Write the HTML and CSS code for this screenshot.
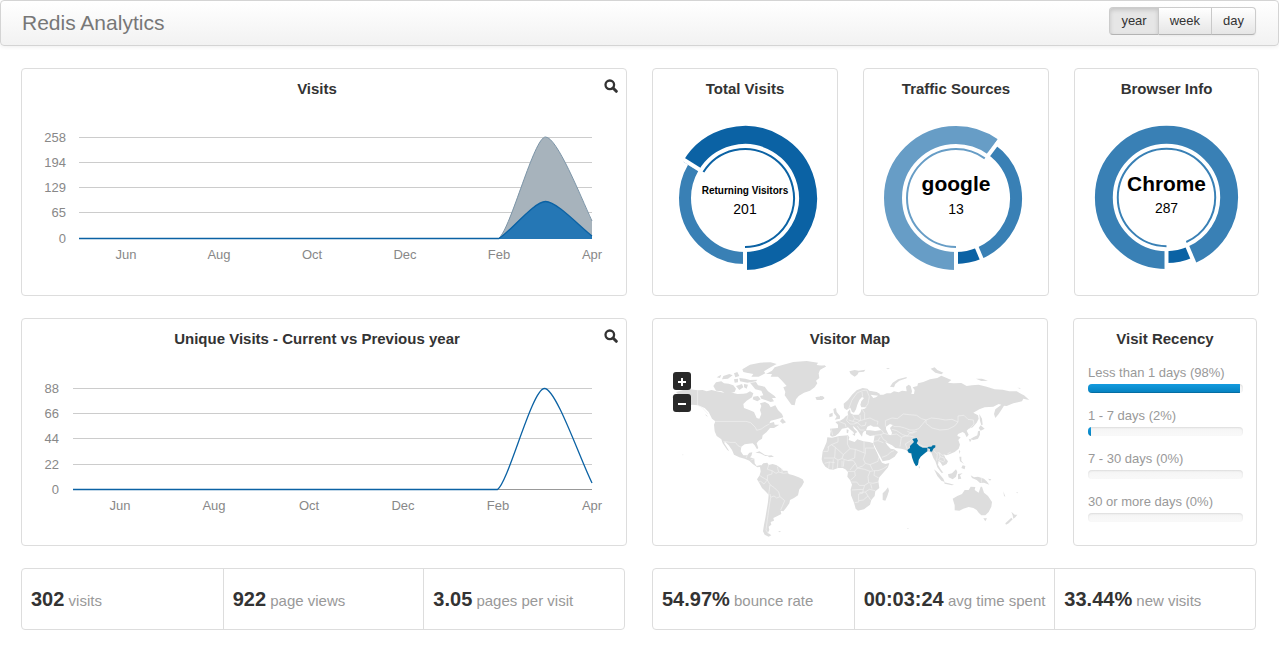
FILE: index.html
```html
<!DOCTYPE html>
<html lang="en">
<head>
<meta charset="utf-8">
<title>Redis Analytics</title>
<link rel="stylesheet" href="styles.css">
</head>
<body>
<header class="navbar">
  <h1 class="brand">Redis Analytics</h1>
  <div class="btn-group">
    <button type="button" class="btn active">year</button>
    <button type="button" class="btn">week</button>
    <button type="button" class="btn">day</button>
  </div>
</header>
<main class="dashboard">
  <div class="row row-top">
    <section class="panel">
      <div class="panel-head">
        <h2 class="title">Visits</h2>
        <button type="button" class="zoom" aria-label="Zoom visits"><svg class="zoom-icon" viewBox="0 0 14 14"><circle cx="5.8" cy="5.8" r="4.3"/><path d="M9 9L12.3 12.3"/></svg></button>
      </div>
      <svg class="chart" viewBox="22 99 604 196">
        <path class="grid" d="M79 137.5H592M79 162.5H592M79 187.5H592M79 212.5H592M79 238.5H592"/>
        <path class="area-total" d="M499 238C511 228 534 137 545.5 137C557 137 580 195 592 221V239H499Z"/>
        <path class="line-total" d="M499 238C511 228 534 137 545.5 137C557 137 580 195 592 221"/>
        <path class="area-unique" d="M499 238C511 231 534 201.500 545.5 201.5C557 201.5 580 227 592 236V239H499Z"/>
        <path class="line" d="M79 238.500H499C511 231 534 201.5 545.5 201.5C557 201.5 580 227 592 236"/>
        <g class="axis end">
          <text x="66" y="142">258</text><text x="66" y="167">194</text><text x="66" y="192">129</text><text x="66" y="217">65</text><text x="66" y="243">0</text>
        </g>
        <g class="axis mid">
          <text x="126" y="259">Jun</text><text x="219" y="259">Aug</text><text x="312" y="259">Oct</text><text x="405" y="259">Dec</text><text x="499" y="259">Feb</text><text x="592" y="259">Apr</text>
        </g>
      </svg>
    </section>
    <section class="panel">
      <h2 class="title">Total Visits</h2>
      <svg class="chart" viewBox="-92 -99 184 196">
        <circle class="seg-on dark" r="63" pathLength="360" stroke-dasharray="239.6 360" transform="rotate(-149.6)"/>
        <circle class="seg mid-blue" r="60" pathLength="360" stroke-dasharray="120.4 360" transform="rotate(90)"/>
        <circle class="ring dark" r="49" pathLength="360" stroke-dasharray="238 360" transform="rotate(-148)"/>
        <path class="gap" d="M52 0H75" transform="rotate(90)"/>
        <path class="gap" d="M52 0H75" transform="rotate(-148)"/>
        <text class="donut-small" y="-4">Returning Visitors</text>
        <text class="donut-value" y="16">201</text>
      </svg>
    </section>
    <section class="panel">
      <h2 class="title">Traffic Sources</h2>
      <svg class="chart" viewBox="-92 -99 184 196">
        <circle class="seg-on light" r="63" pathLength="360" stroke-dasharray="215.5 360" transform="rotate(90)"/>
        <circle class="seg mid-blue" r="60" pathLength="360" stroke-dasharray="121.7 360" transform="rotate(-54.5)"/>
        <circle class="seg dark" r="60" pathLength="360" stroke-dasharray="22.8 360" transform="rotate(67.2)"/>
        <circle class="ring light" r="49" pathLength="360" stroke-dasharray="216 360" transform="rotate(90)"/>
        <path class="gap" d="M52 0H75" transform="rotate(90)"/>
        <path class="gap" d="M52 0H75" transform="rotate(-53)"/>
        <path class="gap" d="M52 0H75" transform="rotate(67.2)"/>
        <text class="donut-big" y="-7">google</text>
        <text class="donut-value" y="16">13</text>
      </svg>
    </section>
    <section class="panel">
      <h2 class="title">Browser Info</h2>
      <svg class="chart" viewBox="-92 -99 184 196">
        <circle class="seg-on mid-blue" r="63" pathLength="360" stroke-dasharray="336.2 360" transform="rotate(90)"/>
        <circle class="seg dark" r="60" pathLength="360" stroke-dasharray="23.8 360" transform="rotate(66.2)"/>
        <circle class="ring mid-blue" r="49" pathLength="360" stroke-dasharray="336 360" transform="rotate(90)"/>
        <path class="gap" d="M52 0H75" transform="rotate(90)"/>
        <path class="gap" d="M52 0H75" transform="rotate(67)"/>
        <text class="donut-big" y="-7">Chrome</text>
        <text class="donut-value" y="16">287</text>
      </svg>
    </section>
  </div>
  <div class="row row-middle">
    <section class="panel">
      <div class="panel-head">
        <h2 class="title">Unique Visits - Current vs Previous year</h2>
        <button type="button" class="zoom" aria-label="Zoom unique visits"><svg class="zoom-icon" viewBox="0 0 14 14"><circle cx="5.8" cy="5.8" r="4.3"/><path d="M9 9L12.3 12.3"/></svg></button>
      </div>
      <svg class="chart" viewBox="22 349 604 196">
        <path class="grid" d="M73 388.5H592M73 413.5H592M73 438.5H592M73 464.5H592"/>
        <path class="grid base" d="M73 489.5H592"/>
        <path class="line" d="M73 489.500H497.500C509 481 532 388.5 544.500 388.5C556 388.5 580 459 592 483"/>
        <g class="axis end">
          <text x="59" y="393">88</text><text x="59" y="418">66</text><text x="59" y="443">44</text><text x="59" y="469">22</text><text x="59" y="494">0</text>
        </g>
        <g class="axis mid">
          <text x="120" y="510">Jun</text><text x="214" y="510">Aug</text><text x="309" y="510">Oct</text><text x="403" y="510">Dec</text><text x="498" y="510">Feb</text><text x="592" y="510">Apr</text>
        </g>
      </svg>
    </section>
    <section class="panel map-panel">
      <h2 class="title">Visitor Map</h2>
      <svg class="chart" viewBox="653 349 394 196" role="img" aria-label="World map with India highlighted">
        <g transform="translate(650 350) scale(.33333)">
          <path class="land" d="M66 141L84 133L78 126L100 120L120 118L143 121L158 120L170 124L185 120L200 124L222 128L235 125L262 132L280 131L290 130L300 124L310 130L306 142L290 152L280 162L282 174L298 180L312 186L320 204L328 206L334 192L330 180L334 168L330 160L345 156L356 162L362 172L376 166L384 180L396 192L400 202L380 208L362 212L358 220L372 216L374 224L388 224L372 234L360 234L350 246L338 256L336 266L326 272L320 280L325 294L321 298L314 286L308 280L296 281L284 283L274 290L272 304L280 316L292 316L298 308L307 307L304 318L300 322L313 326L314 340L320 348L332 345L334 350L322 352L308 342L298 332L284 326L268 322L252 314L246 300L236 286L226 276L222 278L238 304L232 300L218 280L214 268L200 258L194 244L192 224L196 214L186 206L176 186L164 174L144 166L126 164L112 172L104 180L84 190L102 174L90 168L76 160L80 152L72 146Z"/>
          <path class="land" d="M277 58L300 44L330 38L362 37L380 42L358 54L342 64L346 70L326 80L304 80L310 72L290 68L280 66ZM190 108L198 97L214 94L222 100L236 101L250 106L258 116L254 126L240 130L224 130L216 124L198 122ZM200 82L214 74L210 84ZM220 78L238 72L248 76L234 86L216 88ZM252 70L262 66L268 78L256 82ZM252 88L264 86L264 97L254 98ZM268 84L286 86L300 90L322 89L318 94L292 98L270 94ZM258 108L276 102L280 112L268 120ZM282 102L294 104L290 116L282 112ZM300 98L318 96L324 106L344 110L354 124L374 138L378 144L366 144L372 154L362 156L346 150L334 146L330 138L340 136L334 122L316 118ZM310 140L324 138L332 148L322 154L308 148ZM348 72L366 62L374 52L400 44L430 36L470 33L504 38L500 45L528 49L510 60L506 70L508 84L498 92L502 100L494 112L480 122L462 128L446 138L438 148L434 166L424 164L414 150L404 136L406 126L400 112L410 108L396 92L384 80L362 80L366 72ZM496 142L504 140L518 139L524 144L516 150L500 150ZM316 308L328 304L344 314L356 317L346 318L330 310ZM352 317L364 316L372 320L358 322ZM390 214L397 205L408 217L398 221ZM97 313L101 315L98 316ZM166 192L174 200L168 197ZM384 544L392 543L390 547Z"/>
          <path class="land" d="M330 350L340 340L352 338L356 345L368 342L380 346L392 354L400 362L412 362L416 372L430 376L446 382L458 388L462 396L456 408L448 418L444 436L432 444L420 450L418 460L408 474L400 484L392 482L394 492L378 500L370 504L372 512L362 516L364 524L356 530L358 540L354 548L364 556L356 560L344 554L339 544L342 524L346 504L350 480L354 456L356 434L346 424L336 414L326 396L321 388L329 376L332 364Z"/>
          <path class="border" d="M143 121V166L156 172L174 192M196 214H288L302 218L316 232L320 241L334 237L345 229L358 222M220 274L240 277L256 277L264 287L274 292M288 324L292 316M302 330L313 326M356 345L352 358L366 362L366 372L352 376L352 390L344 386L328 376M352 390L342 402L332 394L326 396M366 362L378 370L386 366L382 350M386 366L400 370L414 368M396 356L396 369M352 390L360 404L356 434M360 404L374 414L386 426L390 440L404 452L400 462L392 480M390 440L380 444L372 438L362 442L360 432M362 442L356 480L352 510L348 540L356 552"/>
        </g>
        <g transform="translate(820 350) scale(.33333)">
          <path class="land" d="M30 236L46 235L54 234L54 224L46 216L60 212L70 206L78 198L84 196L83 186L90 178L92 190L100 194L116 194L122 186L124 178L134 176L140 172L124 172L121 164L124 154L132 144L126 141L118 150L112 164L108 178L102 188L96 186L91 173L80 180L72 174L71 161L84 150L96 134L110 121L128 114L142 116L148 122L170 126L180 132L176 137L162 136L152 134L160 144L168 142L178 134L190 134L200 130L212 130L222 124L236 127L246 122L260 124L258 110L266 104L272 108L276 124L274 132L282 132L284 120L278 112L292 108L294 100L310 96L330 88L352 84L364 77L380 84L394 90L384 98L400 100L424 99L440 108L456 106L476 104L500 110L524 118L548 119L568 124L590 124L604 132L612 136L628 150L610 146L606 154L580 160L560 168L552 167L544 180L536 192L526 204L522 192L526 178L544 164L536 162L520 170L494 172L478 178L460 188L474 196L476 206L470 218L458 232L446 236L440 242L446 254L440 262L434 250L428 246L414 252L412 258L422 262L415 270L420 284L416 296L404 306L390 312L380 316L372 314L376 324L384 334L380 342L368 348L362 338L356 332L354 344L362 358L370 368L364 368L352 352L346 334L340 324L334 308L324 304L308 314L298 322L296 338L288 348L280 336L274 314L266 308L258 300L244 296L226 294L216 286L196 276L202 286L212 296L222 298L234 306L224 320L208 330L188 334L180 318L170 300L160 280L162 268L164 256L150 258L138 252L138 242L132 244L128 250L126 260L120 252L112 240L102 230L98 228L102 236L112 246L106 250L104 256L100 246L90 238L84 232L78 234L66 236L56 250L46 258L36 260L30 256L32 244Z"/>
          <path class="land" d="M22 262L36 263L58 258L84 256L88 262L86 270L104 276L112 268L130 274L148 276L160 280L162 290L170 306L178 324L186 338L196 342L208 339L204 352L190 368L178 382L175 394L178 414L166 424L164 438L154 450L150 464L132 478L114 482L107 476L102 458L93 436L92 418L96 404L90 390L82 380L84 366L76 358L68 354L54 354L40 359L28 358L16 350L8 338L5 328L8 304L14 290L20 276ZM188 430L196 422L204 412L207 422L202 438L196 452L188 450ZM40 177L48 174L50 186L60 198L60 206L44 209L50 200L42 190ZM28 192L38 188L38 199L28 202ZM96 251L106 252L104 258ZM80 238L86 240L84 250L80 248ZM88 64L104 60L116 62L136 59L132 65L116 67L112 74L104 80L92 72ZM210 110L218 98L234 88L260 81L260 85L238 92L226 102L222 112ZM332 56L344 52L352 60L370 68L364 73L346 68ZM468 86L486 86L504 92L484 93ZM198 55L210 54L204 58ZM592 113L602 114L600 116ZM478 192L486 206L488 224L484 226L480 212ZM476 234L482 226L494 236L482 242ZM480 242L480 254L474 266L460 270L450 268L460 262L472 256L474 244ZM446 266L454 270L450 277ZM417 300L421 304L418 312ZM418 320L424 320L424 332L432 342L420 334ZM428 346L436 348L434 358L424 354ZM342 358L356 370L370 386L374 396L364 392L352 378ZM372 397L386 400L402 404L396 406L374 401ZM384 373L396 370L408 358L412 366L408 380L398 388L386 382ZM414 372L428 370L420 376L424 386L414 388ZM452 376L462 382L474 380L492 386L500 394L508 404L492 398L480 399L470 390L456 384ZM398 446L412 438L426 432L434 420L446 420L452 410L466 411L464 420L476 428L482 410L486 410L492 428L504 438L516 456L514 470L506 486L496 496L484 496L476 488L470 480L460 474L446 471L430 476L418 482L404 481L404 466ZM490 505L501 505L496 514ZM574 485L584 494L592 494L586 502L580 506L578 496ZM574 503L578 508L566 520L558 524L556 520ZM262 534L267 535L263 537ZM296 346L300 352L297 356ZM504 386L514 388L510 392ZM528 398L532 401ZM550 424L556 440L552 438ZM588 428L594 426L592 430ZM0 48L14 46L18 50L0 57ZM0 138L10 140L12 146L0 150Z"/>
          <path class="sea" d="M138 241L142 230L152 226L160 230L174 230L184 240L166 243L150 241ZM198 230L210 222L218 226L210 234L216 248L214 256L206 254L198 238Z"/>
          <path class="border" d="M86 176L96 150L112 128L128 122L140 120M128 140L126 126M140 120L148 140L144 162L136 172M126 176L134 190L134 208L150 204L166 212L174 214L172 224M84 196L80 212L90 222M98 196L104 206L98 214L86 210M104 206L120 212L134 208M98 214L112 218L120 212M90 222L102 222L112 218L124 228L136 226L138 216M112 228L120 240L134 240M120 195L122 212M56 214L76 222L78 232M34 238L38 256M184 240L192 250L206 254M164 256L182 254L192 250M182 254L190 268L202 276M162 274L174 272L190 278M174 272L180 262M186 322L202 316L212 306L222 302M196 230L196 212L216 204L232 206L250 192L268 194L290 196L304 206L318 210L308 222L296 236L284 240L270 240L254 234L240 230L222 230L214 222M216 238L230 242L248 254L262 258L268 250L284 244M216 254L230 252L244 262L240 290M244 262L256 258L270 258L284 262M262 244L276 250L290 244M318 210L334 204L354 206L376 210L396 208L414 216L404 228L384 238L360 240L336 234L318 220L318 210M414 216L414 198L432 196L444 208L460 210L462 222L450 234M262 298L256 282L272 272L278 264M292 280L310 290L324 292M342 302L348 310L358 308L366 316L376 314M350 332L352 312M358 308L360 320L372 324L374 334M360 320L356 330L372 336"/>
          <path class="border" d="M54 262L54 276L34 284L22 292M34 284L46 292L70 314L90 296L82 282L82 258M90 296L106 298L136 310L136 294L164 294M132 274L132 308M136 310L130 328L136 340L150 344L174 334L176 322M46 292L44 324L12 324M10 304L24 304L26 290M70 314L66 326L54 330L44 324M66 326L84 332L104 324L106 298M54 330L52 354M40 328L38 358M28 336L26 356M14 340L28 336L44 338M66 332L66 352M72 330L70 350M84 332L100 332L106 340L90 360M106 340L112 354L128 348L136 340M84 364L104 364L106 378L92 390M104 364L112 354M112 354L134 358L150 364L164 362L174 362L190 356L202 348M150 344L158 360M164 362L162 376L176 384M150 364L144 380L146 398L158 400L176 396M94 396L110 396L118 406L134 406L146 398M134 406L130 418L96 420M130 418L128 430L116 432L116 456L104 458M118 428L136 426L144 438L130 450L116 452M136 426L148 418L166 422M152 402L156 416M144 438L152 450M382 312L392 306M484 382L484 398"/>
          <path class="india" d="M277 267L290 264L294 272L290 280L298 288L308 293L322 293L326 290L334 290L338 286L346 286L346 292L340 296L336 305L330 304L330 297L322 294L322 304L316 308L302 320L296 330L294 344L288 349L282 338L276 322L274 310L266 308L262 300L270 294L270 288L282 276Z"/>
        </g>
      </svg>
      <div class="map-controls">
        <button type="button" class="map-btn" aria-label="Zoom in"><svg class="map-icon" viewBox="0 0 18 18"><path d="M5 10H13M9 6V14"/></svg></button>
        <button type="button" class="map-btn" aria-label="Zoom out"><svg class="map-icon" viewBox="0 0 18 18"><path d="M5 10H13"/></svg></button>
      </div>
    </section>
    <section class="panel">
      <h2 class="title">Visit Recency</h2>
      <div class="recency">
        <div class="recency-item"><span id="r1">Less than 1 days (98%)</span><div class="progress" role="progressbar" aria-labelledby="r1" aria-valuenow="98"><div class="bar" style="width:98%"></div></div></div>
        <div class="recency-item"><span id="r2">1 - 7 days (2%)</span><div class="progress" role="progressbar" aria-labelledby="r2" aria-valuenow="2"><div class="bar" style="width:2%"></div></div></div>
        <div class="recency-item"><span id="r3">7 - 30 days (0%)</span><div class="progress" role="progressbar" aria-labelledby="r3" aria-valuenow="0"></div></div>
        <div class="recency-item"><span id="r4">30 or more days (0%)</span><div class="progress" role="progressbar" aria-labelledby="r4" aria-valuenow="0"></div></div>
      </div>
    </section>
  </div>
  <div class="row row-stats">
    <section class="panel stats">
      <p class="stat"><strong class="num">302</strong> visits</p>
      <p class="stat"><strong class="num">922</strong> page views</p>
      <p class="stat"><strong class="num">3.05</strong> pages per visit</p>
    </section>
    <section class="panel stats">
      <p class="stat"><strong class="num">54.97%</strong> bounce rate</p>
      <p class="stat"><strong class="num">00:03:24</strong> avg time spent</p>
      <p class="stat"><strong class="num">33.44%</strong> new visits</p>
    </section>
  </div>
</main>
</body>
</html>
```
FILE: styles.css
```css
* { box-sizing: border-box; }
body {
  margin: 0;
  background: #fff;
  color: #333;
  font: 13px/20px "Liberation Sans", Arial, sans-serif;
}
.navbar {
  display: flex;
  align-items: flex-start;
  justify-content: space-between;
  padding: 6px 22px 10px 21px;
  border: 1px solid #d4d4d4;
  border-radius: 4px;
  background: linear-gradient(#fff, #f2f2f2);
  box-shadow: 0 1px 4px rgba(0, 0, 0, .067);
}
.brand {
  margin: 4px 0 0;
  font-size: 21px;
  line-height: 24px;
  font-weight: 400;
  color: #777;
}
.btn-group { display: flex; }
.btn {
  padding: 3px 11px;
  border: 1px solid #ccc;
  border-bottom-color: #b3b3b3;
  border-left-width: 0;
  background: linear-gradient(#fff, #e6e6e6);
  box-shadow: 0 1px 2px rgba(0, 0, 0, .05);
  color: #333;
  font: inherit;
}
.btn:first-child { border-left-width: 1px; border-radius: 4px 0 0 4px; }
.btn:last-child { border-radius: 0 4px 4px 0; }
.btn.active {
  background: #e6e6e6;
  box-shadow: inset 0 2px 4px rgba(0, 0, 0, .15);
}
.dashboard {
  display: grid;
  gap: 22px;
  padding: 22px 20px 25px 21px;
}
.row { display: grid; gap: 25px; }
.row-top { grid-template-columns: 606fr 186fr 186fr 185fr; }
.row-middle { grid-template-columns: 606fr 396fr 184fr; padding-right: 2px; }
.row-stats { grid-template-columns: 1fr 1fr; gap: 27px; padding-right: 3px; }
.panel {
  min-width: 0;
  border: 1px solid #ddd;
  border-radius: 4px;
}
.title {
  flex: 1;
  margin: 10px 0 0;
  font-size: 15px;
  line-height: 20px;
  text-align: center;
}
.panel-head { display: flex; padding: 0 8px; }
.zoom {
  width: 14px;
  height: 14px;
  margin-top: 10px;
  padding: 0;
  border: 0;
  background: none;
}
.zoom-icon { display: block; fill: none; stroke: #333; stroke-width: 2.3; }
.zoom-icon path { stroke-width: 3; stroke-linecap: round; }
.chart { display: block; width: 100%; height: auto; }
.grid { fill: none; stroke: #ccc; }
.base { stroke: #999; }
.line { fill: none; stroke: #0b62a4; stroke-width: 1.3; }
.line-total { fill: none; stroke: #7c95a8; }
.area-total { fill: #a7b3bc; }
.area-unique { fill: #2577b5; }
.axis { fill: #888; }
.axis.end { text-anchor: end; }
.axis.mid { text-anchor: middle; }
.seg, .seg-on, .ring { fill: none; }
.seg { stroke-width: 12; }
.seg-on { stroke-width: 18; }
.ring { stroke-width: 2; }
.dark { stroke: #0b62a4; }
.mid-blue { stroke: #3980b5; }
.light { stroke: #679dc6; }
.gap { stroke: #fff; stroke-width: 4; }
.donut-small, .donut-big, .donut-value { text-anchor: middle; fill: #000; }
.donut-small { font-size: 10px; font-weight: 700; }
.donut-big { font-size: 21px; font-weight: 700; }
.donut-value { font-size: 14px; }
.map-panel { position: relative; }
.land { fill: #ddd; }
.sea { fill: #fff; }
.border { fill: none; stroke: #f2f2f2; stroke-width: 2; }
.india { fill: #0071a4; }
.map-controls {
  position: absolute;
  top: 53px;
  left: 20px;
  display: grid;
  gap: 4px;
}
.map-btn {
  width: 18px;
  height: 18px;
  padding: 0;
  border: 0;
  border-radius: 3px;
  background: #292929;
}
.map-icon { display: block; fill: none; stroke: #fff; stroke-width: 2; }
.recency {
  display: grid;
  gap: 12px;
  padding: 14px 13px 0 14px;
  color: #999;
}
.recency-item { display: grid; gap: 1px; }
.recency-item + .recency-item { padding-top: 1px; }
.progress {
  height: 9px;
  overflow: hidden;
  border-radius: 4px;
  background: linear-gradient(#f5f5f5, #f9f9f9);
  box-shadow: inset 0 1px 2px rgba(0, 0, 0, .1);
}
.bar {
  height: 100%;
  background: linear-gradient(#149bdf, #0480be);
  box-shadow: inset 0 -1px 0 rgba(0, 0, 0, .15);
}
.stats { display: grid; grid-template-columns: repeat(3, 1fr); }
.stat {
  margin: 0;
  padding: 20px 0 18px 9px;
  font-size: 15px;
  color: #999;
  white-space: nowrap;
}
.stat + .stat { border-left: 1px solid #ddd; }
.num { font-size: 20px; color: #333; }
```
